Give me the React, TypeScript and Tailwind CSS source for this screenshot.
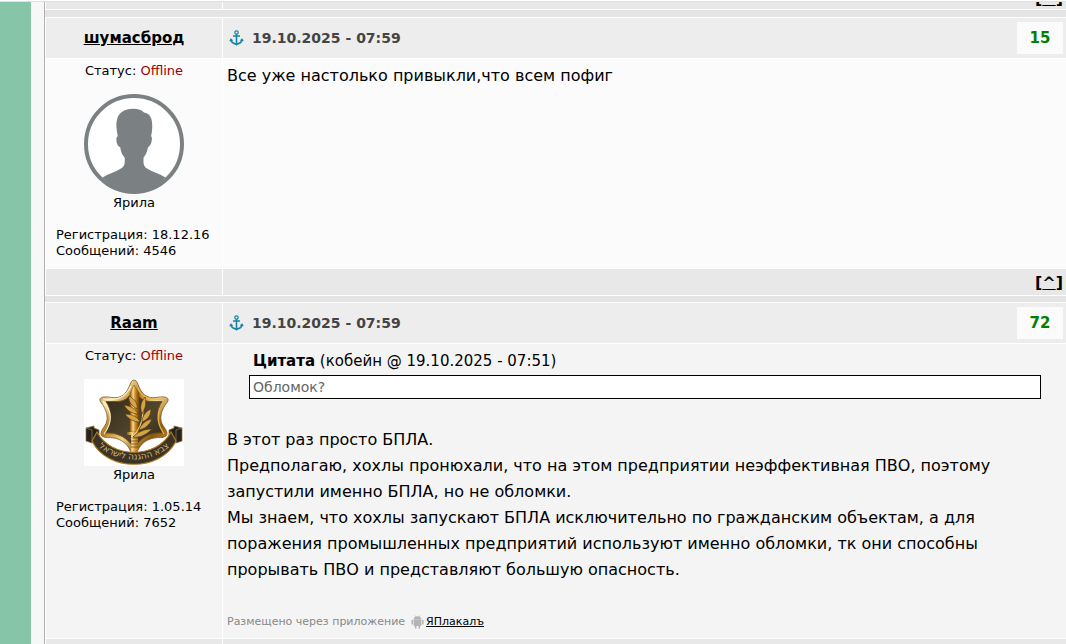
import type React from "react"

interface Post {
  id: number
  author: string
  avatar: React.ReactNode
  rank: string
  registered: string
  messages: number
  date: string
  score: number
  tone: string
  content: React.ReactNode
}

function AnchorIcon() {
  return (
    <svg width="15" height="16" viewBox="0 0 15 16" fill="none" stroke="#1784a4" aria-hidden="true">
      <circle cx="7.5" cy="2.5" r="1.7" strokeWidth="1.2" />
      <path d="M7.5 4.2V14.5" strokeWidth="1.6" />
      <path d="M4 6H11" strokeWidth="1.5" />
      <path d="M2 9.8C2.3 12.6 4.8 13.6 7.5 14.3C10.2 13.6 12.7 12.6 13 9.8" strokeWidth="1.6" />
      <path d="M0.2 11.2L1.8 8.2L4.4 10.4ZM14.8 11.2L13.2 8.2L10.6 10.4Z" fill="#1784a4" stroke="none" />
      <path d="M5.6 13.4L7.5 15.8L9.4 13.4Z" fill="#1784a4" stroke="none" />
    </svg>
  )
}

function AndroidIcon() {
  return (
    <svg width="13" height="14" viewBox="0 0 13 14" fill="#b4b4b4" className="block" aria-hidden="true">
      <path d="M2.6 4.6C2.6 2.6 4.2 1.2 6.5 1.2S10.4 2.6 10.4 4.6Z" />
      <path d="M3.6 0.4L5 2.2M9.4 0.4L8 2.2" stroke="#b4b4b4" strokeWidth="0.6" />
      <path d="M2.6 4.6H10.4V10.2Q10.4 11 9.6 11H9.1V13Q9.1 13.7 8.3 13.7T7.5 13V11H5.5V13Q5.5 13.7 4.7 13.7T3.9 13V11H3.4Q2.6 11 2.6 10.2Z" />
      <rect x="0.4" y="4.8" width="1.5" height="4.8" rx="0.7" />
      <rect x="11.1" y="4.8" width="1.5" height="4.8" rx="0.7" />
    </svg>
  )
}

function DefaultAvatar() {
  return (
    <svg width="100" height="100" viewBox="0 0 100 100" role="img" aria-label="шумасброд">
      <circle cx="50" cy="50" r="48" fill="#fff" stroke="#7b8083" strokeWidth="4" />
      <path
        d="M18.5 83.5C25 79.5 32 77.8 37 74.5C40.5 72.2 41 70.5 40.7 63.5C38.5 61.5 36.8 58 36.2 53.2C34 52.5 32.3 49 32.4 45.5C32.4 43.5 32.8 42.6 33.8 42.3C32.6 36 31.6 30 33.2 24.8C35 18.5 41 15 48.5 14.8C53.5 14.6 57.5 16 60 18.4C65.5 19 68 24 68.2 30C68.4 34.5 68 38.5 67 42.3C68 42.8 68 44 67.8 46C67.4 50 65.8 52.5 64 53.2C63.3 57.5 61.6 61.3 59.6 63.5C59.2 70.5 59.8 72.2 63 74.5C68 77.8 75 79.5 81.5 83.5C73 92.5 62 98 50 98C38 98 27 92.5 18.5 83.5Z"
        fill="#7b8083"
      />
    </svg>
  )
}

function EmblemAvatar() {
  return (
    <svg width="100" height="87" viewBox="0 0 100 87" role="img" aria-label="Raam">
      <defs>
        <linearGradient id="gold" x1="0" y1="0" x2="1" y2="1">
          <stop offset="0" stopColor="#6b4510" />
          <stop offset="0.2" stopColor="#f6e6ad" />
          <stop offset="0.38" stopColor="#b67d20" />
          <stop offset="0.55" stopColor="#f0d48c" />
          <stop offset="0.75" stopColor="#8c590c" />
          <stop offset="1" stopColor="#e3a93a" />
        </linearGradient>
        <linearGradient id="field" x1="0" y1="0" x2="1" y2="1">
          <stop offset="0" stopColor="#2f2818" />
          <stop offset="0.6" stopColor="#51462d" />
          <stop offset="1" stopColor="#2d2616" />
        </linearGradient>
        <linearGradient id="blade" x1="0" y1="0" x2="1" y2="0">
          <stop offset="0" stopColor="#8f5a0e" />
          <stop offset="0.35" stopColor="#f8da90" />
          <stop offset="0.55" stopColor="#d9952a" />
          <stop offset="1" stopColor="#6b430b" />
        </linearGradient>
        <path id="motto" d="M11 65Q28 80.500 50 80.500Q72 80.500 89 65" />
      </defs>
      <rect width="100" height="87" fill="#fff" />
      <path
        d="M50 1C53 1 54 6 56 10C59 16 64 19.500 72 18.500C78 17.500 83 17.500 84 20C85 22.500 81 25 79 30C76 36 76 43 80 48C83 52 84 55 82 57C79 59.500 75 58 70 59C62 60.500 57 65 54 71C52 75 51 77 50 77C49 77 48 75 46 71C43 65 38 60.500 30 59C25 58 21 59.500 18 57C16 55 17 52 20 48C24 43 24 36 21 30C19 25 15 22.500 16 20C17 17.500 22 17.500 28 18.500C36 19.500 41 16 44 10C46 6 47 1 50 1Z"
        fill="url(#gold)"
        stroke="#704612"
        strokeWidth="0.7"
      />
      <path
        d="M50 9C47 16 43 22 34 22.500H22C28 31 28 43 21 54C33 53 43 58 50 69C57 58 67 53 79 54C72 43 72 31 78 22.500H66C57 22 53 16 50 9Z"
        fill="url(#field)"
        stroke="#7a5118"
        strokeWidth="1"
      />
      <path d="M19 20C31 22 41 20 47 7M20 55C29 43 28 32 19 22" fill="none" stroke="#fbf2cf" strokeWidth="1.200" />
      <path d="M54 9C58 20 69 21 81 20M76 29C72 40 75 47 80 55" fill="none" stroke="#f0b24a" strokeWidth="1.200" />
      {/* sword */}
      <path d="M46 14L50 6L55 14V53H46Z" fill="url(#blade)" stroke="#7a4d10" strokeWidth="0.5" />
      <path d="M43 53H58V56H43ZM47 56H54V74H47Z" fill="url(#blade)" />
      <path d="M47 59H54M47 62H54M47 65H54M47 68H54" stroke="#65400e" strokeWidth="0.7" />
      {/* olive branch */}
      <path d="M47 60C55 52 59 43 59 32" fill="none" stroke="#e6c67d" strokeWidth="1.200" />
      <g fill="#d6a445" stroke="#49310c" strokeWidth="0.6">
        <path d="M53 30C48 27 44 23 45 17C51 20 54 25 53 30Z" />
        <path d="M58 35C56 29 56 24 61 18C63 25 61 30 58 35Z" />
        <path d="M54 35C49 35 43 32 40 26C47 27 52 30 54 35Z" />
        <path d="M56 43C50 43 44 40 41 35C48 35 54 38 56 43Z" />
        <path d="M58 43C58 37 62 32 67 30C67 37 63 41 58 43Z" />
        <path d="M55 51C57 45 62 41 68 40C65 47 60 50 55 51Z" />
        <path d="M49 58C54 53 60 50 68 50C62 56 56 59 49 58Z" />
      </g>
      {/* ribbon */}
      <path d="M2 49L10 47V49L15 51V61L8 64L2 62ZM98 49L90 47V49L85 51V61L92 64L98 62Z" fill="#28231a" stroke="#8d713f" strokeWidth="0.8" />
      <path d="M2 49L8 51V64M98 49L92 51V64" fill="none" stroke="#81745c" strokeWidth="0.8" />
      <path
        d="M13 53C27 80 73 80 87 53L92 62C77 93 23 93 8 62Z"
        fill="#3b3323"
        stroke="#b07a22"
        strokeWidth="1.200"
      />
      <text fill="#cdb27a" fontSize="9" textAnchor="middle" className="font-['DejaVu_Sans',sans-serif]">
        <textPath href="#motto" startOffset="50%">
          צבא ההגנה לישראל
        </textPath>
      </text>
    </svg>
  )
}

function TopLink() {
  return (
    <span className="text-base leading-5 font-bold">
      [
      <a href="#top" className="underline">
        ^
      </a>
      ]
    </span>
  )
}

function PostCard({ post }: { post: Post }) {
  return (
    <article className="grid grid-cols-[176px_1fr] gap-px bg-white py-px pl-px">
      <div className="flex h-10 items-center justify-center bg-[#ededed]">
        <a href={`#user-${post.id}`} className="text-[15px] font-bold underline">
          {post.author}
        </a>
      </div>
      <header className="flex h-10 items-center bg-[#ededed] pr-[3px] pl-1.5">
        <a href={`#post-${post.id}`} aria-label="Ссылка на сообщение">
          <AnchorIcon />
        </a>
        <time className="ml-2 text-sm font-bold text-[#444]">{post.date}</time>
        <span className="ml-auto min-w-[46px] bg-[#fbfbfb] py-1 text-center text-[15px] leading-6 font-bold text-[#008000]">
          {post.score}
        </span>
      </header>

      <aside className={`${post.tone} px-2.5 pt-1 pb-[9px] text-[13px] leading-4`}>
        <p className="text-center">
          Статус: <span className="text-[#a00000]">Offline</span>
        </p>
        <div className="mt-[15px] mb-px flex justify-center">{post.avatar}</div>
        <p className="text-center">{post.rank}</p>
        <p className="mt-4">Регистрация: {post.registered}</p>
        <p>Сообщений: {post.messages}</p>
      </aside>
      <div className={`${post.tone} px-1 pt-1 pb-[3px] text-base leading-[26px]`}>{post.content}</div>

      <div className="bg-[#e8e8e8]" />
      <footer className="flex h-[26px] items-center justify-end bg-[#e8e8e8] pt-0.5 pr-[3px]">
        <TopLink />
      </footer>
    </article>
  )
}

export default function App() {
  const posts: Post[] = [
    {
      id: 1,
      author: "шумасброд",
      avatar: <DefaultAvatar />,
      rank: "Ярила",
      registered: "18.12.16",
      messages: 4546,
      date: "19.10.2025 - 07:59",
      score: 15,
      tone: "bg-[#fbfbfb]",
      content: <p>Все уже настолько привыкли,что всем пофиг</p>,
    },
    {
      id: 2,
      author: "Raam",
      avatar: <EmblemAvatar />,
      rank: "Ярила",
      registered: "1.05.14",
      messages: 7652,
      date: "19.10.2025 - 07:59",
      score: 72,
      tone: "bg-[#f4f4f4]",
      content: (
        <>
          <div className="mr-[21px] mb-7 ml-[22px]">
            <p className="pl-1 text-[15px] leading-[27px]">
              <b>Цитата</b> (кобейн @ 19.10.2025 - 07:51)
            </p>
            <blockquote className="border border-black bg-white px-[3px] text-sm leading-[22px] text-[#666]">
              Обломок?
            </blockquote>
          </div>
          <p>В этот раз просто БПЛА.</p>
          <p>
            Предполагаю, хохлы пронюхали, что на этом предприятии неэффективная ПВО, поэтому
            <br />
            запустили именно БПЛА, но не обломки.
          </p>
          <p>
            Мы знаем, что хохлы запускают БПЛА исключительно по гражданским объектам, а для
            <br />
            поражения промышленных предприятий используют именно обломки, тк они способны
            <br />
            прорывать ПВО и представляют большую опасность.
          </p>
          <p className="mt-[26px] flex items-center text-[11px] text-[#888]">
            Размещено через приложение
            <span className="mr-0.5 ml-1.5">
              <AndroidIcon />
            </span>
            <a href="#app" className="text-black underline">
              ЯПлакалъ
            </a>
          </p>
        </>
      ),
    },
  ]

  return (
    <div className="flex h-screen flex-col overflow-hidden border-t border-white bg-[#f7f7f7] font-[Verdana,'DejaVu_Sans',sans-serif] text-black">
      <div className="h-px shrink-0 bg-[#e0e0e0]" />
      <div className="flex min-h-0 flex-1">
        <div className="w-[31px] shrink-0 bg-[#87c5a8]" />
        <main className="ml-[13px] min-w-0 flex-1 border-l border-[#b0b0b0]">
          {/* tail of the previous post */}
          <div className="grid h-2 grid-cols-[176px_1fr] gap-px overflow-hidden bg-white pb-px pl-px">
            <div className="bg-[#e8e8e8]" />
            <div className="flex min-h-0 items-end justify-end overflow-hidden bg-[#e8e8e8] pr-[3px]">
              <TopLink />
            </div>
          </div>
          <div className="h-[7px] bg-[#e4e4e4]" />
          {posts.map((post) => (
            <div key={post.id}>
              <PostCard post={post} />
              <div className="h-1.5 bg-[#e4e4e4]" />
            </div>
          ))}
        </main>
      </div>
    </div>
  )
}
